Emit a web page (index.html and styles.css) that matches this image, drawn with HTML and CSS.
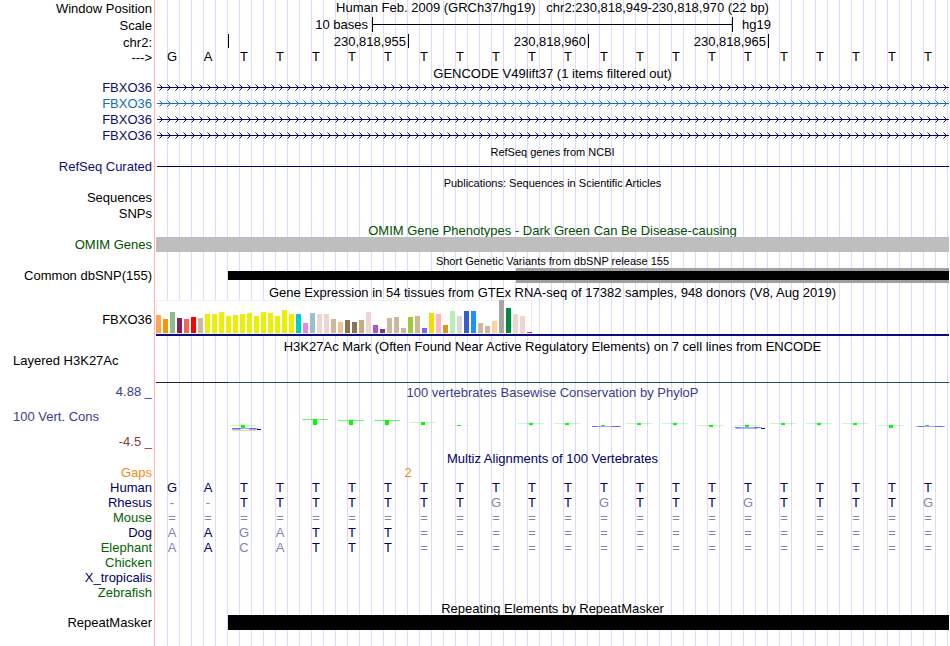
FILE: index.html
```html
<!DOCTYPE html>
<html lang="en">
<head>
<meta charset="utf-8">
<title>Human chr2:230,818,949-230,818,970</title>
<link rel="stylesheet" href="styles.css">
</head>
<body>
<main class="browser">
  <div class="row ruler">
    <div class="label">Window Position</div>
    <div class="caption">Human Feb. 2009 (GRCh37/hg19) &nbsp; chr2:230,818,949-230,818,970 (22 bp)</div>
  </div>
  <div class="row ruler">
    <div class="label">Scale</div>
    <div class="bases">
      <div class="scale-text">10 bases</div>
      <div class="scale-bar"></div>
      <div class="scale-genome">hg19</div>
    </div>
  </div>
  <div class="row ruler positions">
    <div class="label">chr2:</div>
    <div class="bases">
      <div class="tick first"></div>
      <div class="tick">230,818,955</div>
      <div class="tick">230,818,960</div>
      <div class="tick">230,818,965</div>
    </div>
  </div>
  <div class="row ruler">
    <div class="label">---&gt;</div>
    <div class="seq"><span>G</span><span>A</span><span>T</span><span>T</span><span>T</span><span>T</span><span>T</span><span>T</span><span>T</span><span>T</span><span>T</span><span>T</span><span>T</span><span>T</span><span>T</span><span>T</span><span>T</span><span>T</span><span>T</span><span>T</span><span>T</span><span>T</span></div>
  </div>

  <section>
    <h2 class="title tight">GENCODE V49lift37 (1 items filtered out)</h2>
    <div class="row gene navy">
      <div class="label">FBXO36</div>
      <svg class="strand" width="100%" height="16" shape-rendering="crispEdges">
        <defs>
          <pattern id="arrows" width="8" height="16" patternUnits="userSpaceOnUse">
            <path d="M6 7h1v1h-1zM5 6h1v1h-1zM5 8h1v1h-1zM4 5h1v1h-1zM4 9h1v1h-1z" fill="#00006e"/>
            <path d="M3 4h1v1h-1zM3 10h1v1h-1z" fill="#00006e" fill-opacity=".5"/>
          </pattern>
          <pattern id="arrows-blue" width="8" height="16" patternUnits="userSpaceOnUse">
            <path d="M6 7h1v1h-1zM5 6h1v1h-1zM5 8h1v1h-1zM4 5h1v1h-1zM4 9h1v1h-1z" fill="#1470b0"/>
            <path d="M3 4h1v1h-1zM3 10h1v1h-1z" fill="#1470b0" fill-opacity=".5"/>
          </pattern>
        </defs>
        <rect x="1" y="7" width="100%" height="1" fill="#00006e"/>
        <rect width="100%" height="16" fill="url(#arrows)"/>
      </svg>
    </div>
    <div class="row gene blue">
      <div class="label">FBXO36</div>
      <svg class="strand" width="100%" height="16" shape-rendering="crispEdges">
        <rect x="1" y="7" width="100%" height="1" fill="#1470b0"/>
        <rect width="100%" height="16" fill="url(#arrows-blue)"/>
      </svg>
    </div>
    <div class="row gene navy">
      <div class="label">FBXO36</div>
      <svg class="strand" width="100%" height="16" shape-rendering="crispEdges">
        <rect x="1" y="7" width="100%" height="1" fill="#00006e"/>
        <rect width="100%" height="16" fill="url(#arrows)"/>
      </svg>
    </div>
    <div class="row gene navy">
      <div class="label">FBXO36</div>
      <svg class="strand" width="100%" height="16" shape-rendering="crispEdges">
        <rect x="1" y="7" width="100%" height="1" fill="#00006e"/>
        <rect width="100%" height="16" fill="url(#arrows)"/>
      </svg>
    </div>
  </section>

  <section>
    <h2 class="title small">RefSeq genes from NCBI</h2>
    <div class="row gene navy">
      <div class="label">RefSeq Curated</div>
      <svg class="strand" width="100%" height="16" shape-rendering="crispEdges">
        <rect x="1" y="7" width="100%" height="1" fill="#00006e"/>
      </svg>
    </div>
  </section>

  <section>
    <h2 class="title small">Publications: Sequences in Scientific Articles</h2>
    <div class="row gene"><div class="label">Sequences</div></div>
    <div class="row gene"><div class="label">SNPs</div></div>
  </section>

  <section class="omim">
    <h2 class="title tight">OMIM Gene Phenotypes - Dark Green Can Be Disease-causing</h2>
    <div class="row">
      <div class="label">OMIM Genes</div>
      <div class="bar gray"></div>
    </div>
  </section>

  <section class="spaced">
    <h2 class="title small">Short Genetic Variants from dbSNP release 155</h2>
    <div class="row">
      <div class="label">Common dbSNP(155)</div>
      <div class="bases variants">
        <div class="insertion"></div>
        <div class="deletion"></div>
      </div>
    </div>
  </section>

  <section class="spaced-more">
    <h2 class="title">Gene Expression in 54 tissues from GTEx RNA-seq of 17382 samples, 948 donors (V8, Aug 2019)</h2>
    <div class="row expression">
      <div class="label">FBXO36</div>
      <div class="gtex">
        <div class="tissues">
          <i style="height:18px;background:#ffa54f"></i><i style="height:14px;background:#ee9a00"></i><i style="height:21px;background:#8fbc8f"></i><i style="height:15px;background:#8b1c62"></i><i style="height:14px;background:#ee6a50"></i><i style="height:16px;background:#ff0000"></i><i style="height:15px;background:#cdb79e"></i><i style="height:19px;background:#eeee00"></i><i style="height:19px;background:#eeee00"></i><i style="height:21px;background:#eeee00"></i><i style="height:17px;background:#eeee00"></i><i style="height:18px;background:#eeee00"></i><i style="height:19px;background:#eeee00"></i><i style="height:20px;background:#eeee00"></i><i style="height:17px;background:#eeee00"></i><i style="height:21px;background:#eeee00"></i><i style="height:20px;background:#eeee00"></i><i style="height:17px;background:#eeee00"></i><i style="height:23px;background:#eeee00"></i><i style="height:19px;background:#eeee00"></i><i style="height:19px;background:#00cdcd"></i><i style="height:10px;background:#ee82ee"></i><i style="height:20px;background:#9ac0cd"></i><i style="height:19px;background:#eed5d2"></i><i style="height:19px;background:#eed5d2"></i><i style="height:14px;background:#cdb79e"></i><i style="height:11px;background:#eec591"></i><i style="height:13px;background:#8b7355"></i><i style="height:11px;background:#8b7355"></i><i style="height:13px;background:#cdaa7d"></i><i style="height:21px;background:#eed5d2"></i><i style="height:8px;background:#b452cd"></i><i style="height:4px;background:#7a378b"></i><i style="height:15px;background:#cdb79e"></i><i style="height:16px;background:#cdb79e"></i><i style="height:5px;background:#cdb79e"></i><i style="height:16px;background:#9acd32"></i><i style="height:17px;background:#cdb79e"></i><i style="height:5px;background:#7a67ee"></i><i style="height:20px;background:#ffd700"></i><i style="height:19px;background:#ffb6c1"></i><i style="height:8px;background:#cd9b1d"></i><i style="height:22px;background:#b4eeb4"></i><i style="height:17px;background:#d9d9d9"></i><i style="height:22px;background:#3a5fcd"></i><i style="height:22px;background:#1e90ff"></i><i style="height:10px;background:#cdb79e"></i><i style="height:7px;background:#cdb79e"></i><i style="height:12px;background:#ffd39b"></i><i style="height:33px;background:#a6a6a6"></i><i style="height:25px;background:#008b45"></i><i style="height:19px;background:#eed5d2"></i><i style="height:17px;background:#eed5d2"></i><i style="height:1px;background:#ff00ff"></i>
        </div>
      </div>
    </div>
  </section>

  <section class="histone">
    <h2 class="title tight">H3K27Ac Mark (Often Found Near Active Regulatory Elements) on 7 cell lines from ENCODE</h2>
    <div class="row">
      <div class="label start">Layered H3K27Ac</div>
      <div class="bases signal"><div class="signal-low"></div><div class="signal-high"></div></div>
    </div>
  </section>

  <section class="row conservation">
    <div class="axis">
      <div class="label">4.88 _</div>
      <div class="label start">100 Vert. Cons</div>
      <div class="label negative">-4.5 _</div>
    </div>
    <div class="phylop">
      <h2 class="caption">100 vertebrates Basewise Conservation by PhyloP</h2>
      <svg width="100%" height="50" viewBox="0 0 793 50" preserveAspectRatio="none" shape-rendering="crispEdges">
        <g fill="#0000ff">
          <path fill-opacity=".35" d="M76 28h26v1h-26zM436 26h29v1h-29zM579 27h27v1h-27zM760 26h29v1h-29z"/>
          <path fill-opacity=".35" d="M76 28h9v1h-9zM93 28h7v1h-7zM436 26h6v1h-6zM456 26h8v1h-8zM579 27h5v1h-5zM598 27h6v1h-6zM763 26h5v1h-5zM779 26h8v1h-8z"/>
          <path fill-opacity=".3" d="M76 29h8v1h-8zM93 29h8v1h-8zM580 28h22v1h-22z"/>
          <path d="M101 29h4v1h-4zM605 28h4v1h-4z"/>
        </g>
        <path fill="#e0d890" d="M77 30h23v1h-23z"/>
        <g fill="#00ff00">
          <path fill-opacity=".6" d="M146 19h26v1h-26zM182 20h26v1h-26zM218 20h26v1h-26z"/>
          <path fill-opacity=".25" d="M74 25h26v1h-26zM254 22h26v1h-26zM362 23h26v1h-26zM398 23h26v1h-26zM470 23h26v1h-26zM506 23h26v1h-26zM542 25h26v1h-26zM578 25h26v1h-26zM614 23h26v1h-26zM650 23h26v1h-26zM686 23h26v1h-26zM722 25h26v1h-26z"/>
          <path fill-opacity=".1" d="M290 25h26v1h-26z"/>
          <path d="M85 25h4v3h-4zM157 19h4v6h-4zM193 20h4v5h-4zM229 20h4v5h-4zM265 22h4v3h-4zM301 25h4v1h-4zM373 23h4v2h-4zM409 23h4v2h-4zM445 25h4v1h-4zM481 23h4v2h-4zM517 23h4v2h-4zM553 25h4v2h-4zM589 25h4v2h-4zM625 23h4v2h-4zM661 23h4v2h-4zM697 23h4v2h-4zM733 25h4v3h-4zM769 25h4v1h-4z"/>
        </g>
      </svg>
    </div>
  </section>

  <section class="multiz">
    <h2 class="title tight">Multiz Alignments of 100 Vertebrates</h2>
    <div class="row gaps">
      <div class="label">Gaps</div>
      <div class="bases"><span class="gap-count">2</span></div>
    </div>
    <div class="row">
      <div class="label">Human</div>
      <div class="seq"><span>G</span><span>A</span><span>T</span><span>T</span><span>T</span><span>T</span><span>T</span><span>T</span><span>T</span><span>T</span><span>T</span><span>T</span><span>T</span><span>T</span><span>T</span><span>T</span><span>T</span><span>T</span><span>T</span><span>T</span><span>T</span><span>T</span></div>
    </div>
    <div class="row">
      <div class="label">Rhesus</div>
      <div class="seq"><s>-</s><s>-</s><span>T</span><span>T</span><span>T</span><span>T</span><span>T</span><span>T</span><span>T</span><s>G</s><span>T</span><span>T</span><s>G</s><span>T</span><span>T</span><span>T</span><s>G</s><span>T</span><span>T</span><span>T</span><span>T</span><s>G</s></div>
    </div>
    <div class="row">
      <div class="label green">Mouse</div>
      <div class="seq"><s>=</s><s>=</s><s>=</s><s>=</s><s>=</s><s>=</s><s>=</s><s>=</s><s>=</s><s>=</s><s>=</s><s>=</s><s>=</s><s>=</s><s>=</s><s>=</s><s>=</s><s>=</s><s>=</s><s>=</s><s>=</s><s>=</s></div>
    </div>
    <div class="row">
      <div class="label">Dog</div>
      <div class="seq"><s>A</s><span>A</span><s>G</s><s>A</s><span>T</span><span>T</span><span>T</span><s>=</s><s>=</s><s>=</s><s>=</s><s>=</s><s>=</s><s>=</s><s>=</s><s>=</s><s>=</s><s>=</s><s>=</s><s>=</s><s>=</s><s>=</s></div>
    </div>
    <div class="row">
      <div class="label green">Elephant</div>
      <div class="seq"><s>A</s><span>A</span><s>C</s><s>A</s><span>T</span><span>T</span><span>T</span><s>=</s><s>=</s><s>=</s><s>=</s><s>=</s><s>=</s><s>=</s><s>=</s><s>=</s><s>=</s><s>=</s><s>=</s><s>=</s><s>=</s><s>=</s></div>
    </div>
    <div class="row"><div class="label green">Chicken</div></div>
    <div class="row"><div class="label">X_tropicalis</div></div>
    <div class="row"><div class="label green">Zebrafish</div></div>
  </section>

  <section class="spaced">
    <h2 class="title tight">Repeating Elements by RepeatMasker</h2>
    <div class="row">
      <div class="label">RepeatMasker</div>
      <div class="bases"><div class="repeat"></div></div>
    </div>
  </section>
</main>
</body>
</html>
```
FILE: styles.css
```css
* {
  box-sizing: border-box;
}

body {
  margin: 0;
  background: #fff;
  color: #000;
  font: 13px/15px "Liberation Sans", Arial, sans-serif;
}

/* Pink divider beside the labels, then a guide line every 12px */
.browser {
  min-height: 100vh;
  padding: 0 1px 16px 0;
  background:
    linear-gradient(#ffb4b4, #ffb4b4) 154px 0 / 1px 100% no-repeat,
    linear-gradient(#fff, #fff) 0 0 / 156px 100% no-repeat,
    repeating-linear-gradient(90deg, transparent 0 11px, #dcdcfa 11px 12px);
}

.row {
  display: grid;
  grid-template-columns: 152px minmax(0, 1fr);
  column-gap: 4px;
  min-height: 15px;
}

.label {
  text-align: right;
  white-space: nowrap;
}

.label.start {
  padding-left: 13px;
  text-align: left;
}

.title,
.caption {
  margin: 0;
  font-size: 13px;
  font-weight: normal;
  text-align: center;
  white-space: nowrap;
}

.title {
  height: 15px;
  margin-left: 156px;
}

.title.tight {
  height: 14px;
}

.title.small {
  font-size: 11px;
  line-height: 16px;
}

/* One column per base; bars that run to the edge cover the spare pixel */
.bases,
.seq {
  display: grid;
  grid-template-columns: repeat(22, minmax(0, 1fr));
}

.bases {
  margin-right: 1px;
}

.seq {
  margin: 0 3px 0 -2px;
  text-align: center;
}

.seq s {
  color: #8484b4;
  text-decoration: none;
}

/* Ruler */
.ruler {
  height: 17px;
}

.ruler .label {
  line-height: 17px;
}

.ruler.positions {
  height: 15px;
}

.scale-text {
  grid-column: 1 / 7;
  padding-right: 4px;
  text-align: right;
}

.scale-bar {
  grid-column: 7 / 17;
  height: 15px;
  margin-right: -1px;
  border: solid #000;
  border-width: 0 1px;
  background: linear-gradient(#000, #000) 0 7px / 100% 1px no-repeat;
}

.scale-genome {
  grid-column: 17 / 23;
  padding-left: 10px;
}

.tick {
  grid-column: span 5;
  height: 14px;
  margin-right: -1px;
  padding-right: 2px;
  border-right: 1px solid #000;
  text-align: right;
}

.tick.first {
  grid-column: span 2;
}

/* Gene tracks */
.gene {
  height: 16px;
}

.strand {
  display: block;
}

.navy .label {
  color: #0c0c78;
}

.blue .label {
  color: #1470b0;
}

.spaced,
.omim {
  padding-top: 1px;
}

.spaced-more {
  padding-top: 2px;
}

.omim {
  color: #005000;
}

.bar.gray {
  background: #bebebe;
}

.insertion,
.deletion,
.repeat,
.signal-high {
  margin-right: -1px;
}

.insertion,
.deletion {
  grid-row: 1;
}

.insertion {
  grid-column: 11 / 23;
  background: #a0a0a0;
}

.deletion {
  grid-column: 3 / 23;
  margin-top: 3px;
  margin-bottom: 3px;
  background: #000;
}

.repeat {
  grid-column: 3 / 23;
  background: #000;
}

/* Expression */
.expression .label {
  padding-top: 12px;
}

.gtex {
  border-bottom: 2px solid #0c0c78;
}

.tissues {
  display: flex;
  align-items: flex-end;
  gap: 2px;
  width: max-content;
  height: 34px;
  padding-bottom: 1px;
  background: #fff;
  box-shadow: inset 0 0 0 1px #eee;
}

.tissues i {
  width: 5px;
}

/* Histone signal */
.histone {
  padding-top: 3px;
}

.histone .row {
  height: 30px;
}

.signal {
  align-items: end;
}

.signal-low,
.signal-high {
  height: 1px;
}

.signal-low {
  grid-column: 1 / 3;
  background: #301c28;
}

.signal-high {
  grid-column: 3 / 23;
  background: #2c4a60;
}

/* Conservation */
.conservation {
  height: 67px;
  color: #3c3c8c;
}

.axis {
  display: grid;
  align-content: start;
  row-gap: 10px;
  padding-top: 1px;
}

.negative {
  color: #8c3c3c;
}

.phylop {
  padding-top: 2px;
}

.phylop svg {
  display: block;
}

.multiz {
  padding-top: 1px;
  color: #000064;
}

.multiz .green {
  color: #006400;
}

.multiz .gaps {
  color: #f08c14;
}

.gap-count {
  grid-column: 7 / 9;
  text-align: center;
}
```
